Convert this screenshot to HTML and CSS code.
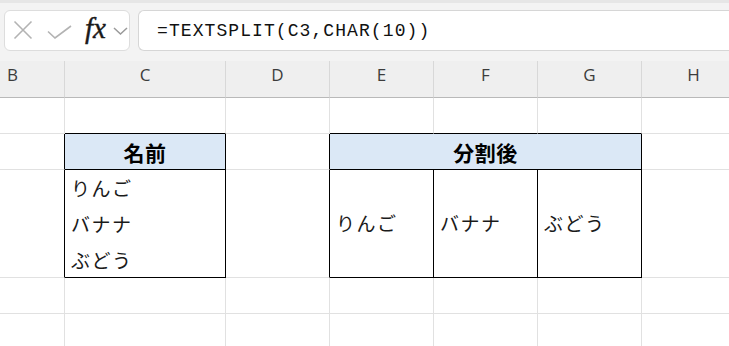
FILE: index.html
```html
<!DOCTYPE html>
<html lang="ja">
<head>
<meta charset="utf-8">
<link rel="stylesheet" href="styles.css">
</head>
<body>
<div class="app">
  <div class="formula-bar">
    <div class="fx-box">
      <svg class="icon icon-x" width="20" height="20" viewBox="0 0 20 20"><path d="M1.5 1.5 L18.5 18.5 M18.5 1.5 L1.5 18.5" stroke="#b3b3b3" stroke-width="1.6" fill="none"/></svg>
      <svg class="icon icon-check" width="25" height="14" viewBox="0 0 25 14"><path d="M1 6.5 L8 13 L24 1" stroke="#b3b3b3" stroke-width="1.6" fill="none"/></svg>
      <span class="fx">fx</span>
      <svg class="icon icon-chev" width="15" height="8" viewBox="0 0 15 8"><path d="M1 1 L7.5 7 L14 1" stroke="#9a9a9a" stroke-width="1.5" fill="none"/></svg>
    </div>
    <div class="formula-input">=TEXTSPLIT(C3,CHAR(10))</div>
  </div>
  <div class="sheet">
    <div class="colhead">B</div>
    <div class="colhead">C</div>
    <div class="colhead">D</div>
    <div class="colhead">E</div>
    <div class="colhead">F</div>
    <div class="colhead">G</div>
    <div class="colhead">H</div>

    <div class="cell"></div>
    <div class="cell bb"></div>
    <div class="cell"></div>
    <div class="cell bb"></div>
    <div class="cell bb"></div>
    <div class="cell bb"></div>
    <div class="cell"></div>

    <div class="cell br"></div>
    <div class="cell br bb head">名前</div>
    <div class="cell br"></div>
    <div class="cell br bb head span3">分割後</div>
    <div class="cell"></div>

    <div class="cell br tall"></div>
    <div class="cell br bb tall multi"><span>りんご</span><span>バナナ</span><span>ぶどう</span></div>
    <div class="cell br tall"></div>
    <div class="cell br bb tall mid">りんご</div>
    <div class="cell br bb tall mid">バナナ</div>
    <div class="cell br bb tall mid">ぶどう</div>
    <div class="cell tall"></div>

    <div class="cell"></div>
    <div class="cell"></div>
    <div class="cell"></div>
    <div class="cell"></div>
    <div class="cell"></div>
    <div class="cell"></div>
    <div class="cell"></div>

    <div class="cell"></div>
    <div class="cell"></div>
    <div class="cell"></div>
    <div class="cell"></div>
    <div class="cell"></div>
    <div class="cell"></div>
    <div class="cell"></div>
  </div>
</div>
</body>
</html>
```
FILE: styles.css
```css
* { box-sizing: border-box; }
html, body { margin: 0; padding: 0; }
body {
  width: 729px;
  height: 346px;
  overflow: hidden;
  background: #ffffff;
  font-family: "Noto Sans CJK JP", "Noto Sans", sans-serif;
}
.app { width: 729px; overflow: hidden; }

.formula-bar {
  background: #f3f3f3;
  border-top: 3px solid #e6e6e6;
  height: 61px;
  display: flex;
  align-items: flex-start;
  padding: 7px 0 0 4px;
  gap: 8px;
}
.fx-box {
  width: 126px;
  height: 41px;
  background: #ffffff;
  border: 1px solid #dddddd;
  border-radius: 6px;
  display: flex;
  align-items: center;
  padding-left: 8px;
}
.icon { display: block; flex: none; }
.icon-x { margin-right: 14px; margin-top: -1px; }
.icon-check { margin-top: 3px; margin-right: 13px; }
.fx {
  font-family: "Liberation Serif", "DejaVu Serif", serif;
  font-style: italic;
  font-weight: 400;
  font-size: 29px;
  color: #1a1a1a;
  line-height: 1;
  margin-top: -4px;
  margin-right: 7px;
  -webkit-text-stroke: 0.4px #1a1a1a;
}
.icon-chev { margin-top: 1px; }

.formula-input {
  flex: 1;
  height: 41px;
  background: #ffffff;
  border: 1px solid #d6d6d6;
  border-right: none;
  border-radius: 6px 0 0 6px;
  padding-left: 18px;
  padding-top: 2px;
  font-family: "Liberation Mono", "DejaVu Sans Mono", monospace;
  font-size: 18px;
  letter-spacing: 1.08px;
  line-height: 37px;
  color: #111111;
}

.sheet {
  display: grid;
  grid-template-columns: 104px 161px 104px 104px 104px 104px 104px;
  grid-template-rows: 37px 36px 36px 108px 36px 36px;
  margin-left: -39px;
  width: 900px;
}
.colhead {
  background: #efefef;
  border-right: 1px solid #d8d8d8;
  border-bottom: 1px solid #b9b9b9;
  display: flex;
  align-items: center;
  justify-content: center;
  font-family: "Open Sans", "Noto Sans", sans-serif;
  font-size: 17px;
  color: #3c3c3c;
  padding-bottom: 9px;
}
.cell {
  border-right: 1px solid #e1e1e1;
  border-bottom: 1px solid #e1e1e1;
  font-size: 19px;
  letter-spacing: 1.5px;
  color: #1a1a1a;
}
.cell.br { border-right-color: #000000; }
.cell.bb { border-bottom-color: #000000; }
.head {
  background: #dbe8f6;
  font-weight: 700;
  display: flex;
  align-items: center;
  justify-content: center;
  color: #000000;
  font-size: 21px;
  letter-spacing: 0.5px;
}
.span3 { grid-column: span 3; }
.multi {
  display: flex;
  flex-direction: column;
  padding-left: 6px;
}
.multi span { height: 36px; line-height: 36px; }
.mid {
  display: flex;
  align-items: center;
  padding-left: 6px;
  padding-bottom: 2px;
}
```
